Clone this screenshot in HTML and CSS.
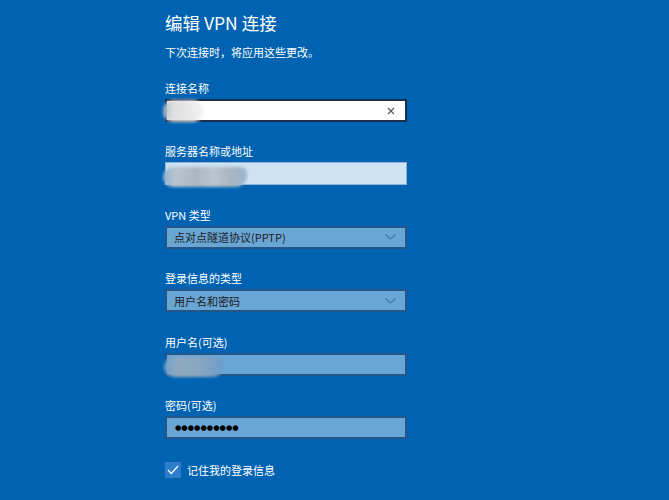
FILE: index.html
```html
<!DOCTYPE html>
<html lang="zh-CN">
<head>
<meta charset="utf-8">
<link rel="stylesheet" href="styles.css">
</head>
<body>
<div class="page">
  <h1 class="title">编辑 VPN 连接</h1>
  <p class="subtitle">下次连接时，将应用这些更改。</p>

  <div class="field">
    <div class="label">连接名称</div>
    <div class="box box-white">
      <span class="blur blur-a"></span>
      <span class="spacer"></span>
      <svg class="clear" width="8" height="8" viewBox="0 0 8 8"><path d="M1 1L7 7M7 1L1 7" stroke="#555" stroke-width="1.1"/></svg>
    </div>
  </div>

  <div class="field">
    <div class="label">服务器名称或地址</div>
    <div class="box box-light">
      <span class="blur blur-b"></span>
    </div>
  </div>

  <div class="field">
    <div class="label">VPN 类型</div>
    <div class="box box-select">
      <span class="value">点对点隧道协议(PPTP)</span>
      <span class="spacer"></span>
      <svg class="chev" width="11" height="6" viewBox="0 0 11 6"><path d="M0.5 0.5L5.5 5L10.5 0.5" fill="none" stroke="#2f5f8c" stroke-width="1"/></svg>
    </div>
  </div>

  <div class="field">
    <div class="label">登录信息的类型</div>
    <div class="box box-select">
      <span class="value">用户名和密码</span>
      <span class="spacer"></span>
      <svg class="chev" width="11" height="6" viewBox="0 0 11 6"><path d="M0.5 0.5L5.5 5L10.5 0.5" fill="none" stroke="#2f5f8c" stroke-width="1"/></svg>
    </div>
  </div>

  <div class="field">
    <div class="label">用户名(可选)</div>
    <div class="box box-select">
      <span class="blur blur-c"></span>
    </div>
  </div>

  <div class="field">
    <div class="label">密码(可选)</div>
    <div class="box box-select">
      <span class="dots">●●●●●●●●●●</span>
    </div>
  </div>

  <div class="check-row">
    <span class="checkbox">
      <svg width="12" height="10" viewBox="0 0 12 10"><path d="M1 5L4.3 8.5L11 1" fill="none" stroke="#fff" stroke-width="1.3"/></svg>
    </span>
    <span class="check-label">记住我的登录信息</span>
  </div>
</div>
</body>
</html>
```

FILE: styles.css
```css
html, body {
  margin: 0;
  padding: 0;
  background: #0063b1;
}
body {
  width: 669px;
  height: 500px;
  overflow: hidden;
  font-family: "Noto Sans CJK SC", "Noto Sans", "Liberation Sans", sans-serif;
  color: #ffffff;
}
.page {
  padding: 9px 0 0 165px;
  display: flex;
  flex-direction: column;
}
.title {
  margin: 0;
  font-size: 17.5px;
  font-weight: 400;
  line-height: 28px;
  height: 28px;
}
.subtitle {
  margin: 7px 0 0 0;
  font-size: 11px;
  line-height: 16px;
  height: 16px;
}
.field {
  margin-top: 20px;
  display: flex;
  flex-direction: column;
}
.field + .field {
  margin-top: 21.4px;
}
.label {
  font-size: 11px;
  line-height: 16px;
  height: 16px;
  margin-bottom: 3px;
}
.box {
  width: 242px;
  height: 23px;
  box-sizing: border-box;
  border: 2px solid #1d3e63;
  display: flex;
  align-items: center;
  padding: 0 8px 0 7px;
  color: #1a1a1a;
  font-size: 11px;
  position: relative;
  overflow: visible;
}
.box-white {
  background: #ffffff;
  border-color: #1a2f4a;
}
.box-light {
  background: #cfe2f2;
  border: 1px solid #8fb6d9;
}
.box-select {
  background: #6aa6d5;
  border-color: #23578a;
}
.spacer { flex: 1; }
.value { line-height: 16px; }
.clear { margin-right: 2px; }
.chev { margin-right: 1px; }
.blur {
  display: block;
  flex: none;
  filter: blur(1.6px);
  border-radius: 10px;
}
.blur-a {
  width: 40px;
  height: 22px;
  margin-left: -11px;
  background: linear-gradient(90deg, #9fb8cf 0%, #dcdcdc 25%, #e4e4e4 60%, #f2f2f2 100%);
  opacity: 0.9;
}
.blur-b {
  width: 84px;
  height: 20px;
  margin-left: -10px;
  margin-top: 6px;
  background: linear-gradient(90deg, #8fb3d4 0%, #b8c4cf 15%, #aab7c3 40%, #bac5cf 60%, #a9b6c2 80%, #9ab4cf 100%);
  border-radius: 10px 6px 12px 10px;
}
.blur-c {
  width: 60px;
  height: 20px;
  margin-left: -10px;
  margin-top: 5px;
  background: linear-gradient(90deg, #6a9fcf 0%, #8fa9c1 20%, #8aa6c0 60%, #6b9ccb 100%);
  border-radius: 10px 6px 12px 10px;
}
.dots {
  font-family: "DejaVu Sans", sans-serif;
  font-size: 7.3px;
  letter-spacing: 0;
  color: #000;
  margin-left: 1px;
}
.check-row {
  margin-top: 23px;
  display: flex;
  align-items: center;
  gap: 6px;
}
.checkbox {
  width: 16px;
  height: 16px;
  background: #2d7dcc;
  display: flex;
  align-items: center;
  justify-content: center;
}
.check-label {
  font-size: 11px;
  line-height: 16px;
}
```
